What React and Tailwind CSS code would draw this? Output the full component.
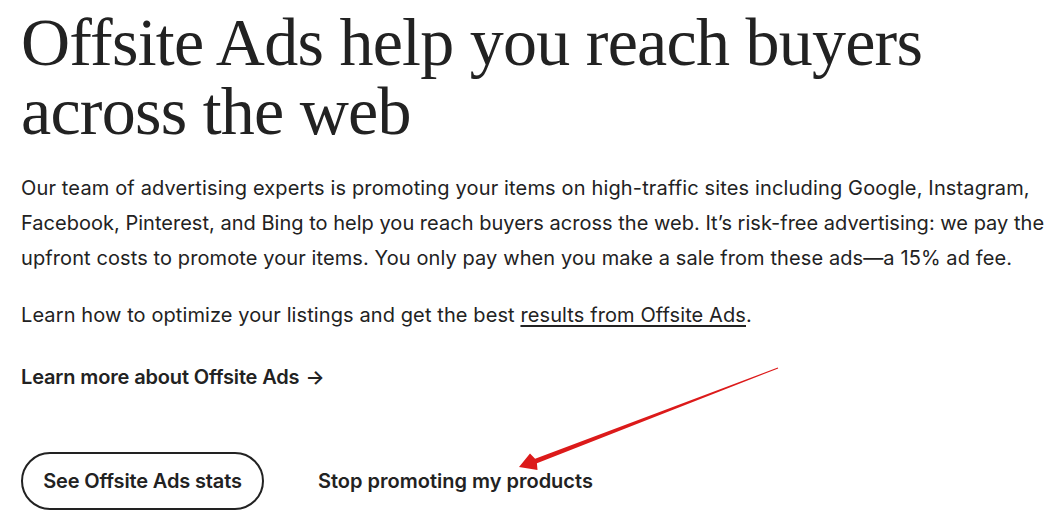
import React from "react";

export default function App() {
  return (
    <div className="relative min-h-screen bg-white text-[#222222] overflow-hidden">
      <div className="pl-[21px] pt-[8px]">
        <h1 className="font-['Liberation_Serif',serif] text-[68px] leading-[69px] font-normal tracking-[-0.75px] whitespace-nowrap">
          Offsite Ads help you reach buyers
          <br />
          across the web
        </h1>
        <p className="mt-[25px] font-['Inter',sans-serif] text-[20px] leading-[35px] whitespace-nowrap">
          <span className="tracking-[0.15px]">
            Our team of advertising experts is promoting your items on high-traffic sites including Google, Instagram,
          </span>
          <br />
          <span className="tracking-[0.02px]">
            Facebook, Pinterest, and Bing to help you reach buyers across the web. It’s risk-free advertising: we pay the
          </span>
          <br />
          <span className="tracking-[0.1px]">
            upfront costs to promote your items. You only pay when you make a sale from these ads—a 15% ad fee.
          </span>
        </p>
        <p className="mt-[22px] font-['Inter',sans-serif] text-[20px] leading-[35px] tracking-[0.1px] whitespace-nowrap">
          Learn how to optimize your listings and get the best{" "}
          <a href="#" className="underline underline-offset-[3px]">results from Offsite Ads</a>.
        </p>
        <a href="#" className="mt-[29px] inline-flex items-center font-['Inter',sans-serif] text-[20px] font-semibold tracking-[-0.15px]">
          Learn more about Offsite Ads <span className="ml-1.5">→</span>
        </a>
        <div className="mt-[60px] flex items-center gap-[54px]">
          <button className="h-[58px] w-[243px] rounded-full border-2 border-[#222222] font-['Inter',sans-serif] text-[20px] font-semibold tracking-[-0.15px]">
            See Offsite Ads stats
          </button>
          <button className="font-['Inter',sans-serif] text-[20px] font-semibold">
            Stop promoting my products
          </button>
        </div>
      </div>
      <svg className="absolute left-0 top-0 pointer-events-none" width="1051" height="521" viewBox="0 0 1051 521">
        <path
          d="M777.8,367.5 L535.1,458.7 L530,453.5 L519,467 L537.5,470 L536.9,463.3 L778.2,368.5 Z"
          fill="#dc1a1a"
        />
      </svg>
    </div>
  );
}
